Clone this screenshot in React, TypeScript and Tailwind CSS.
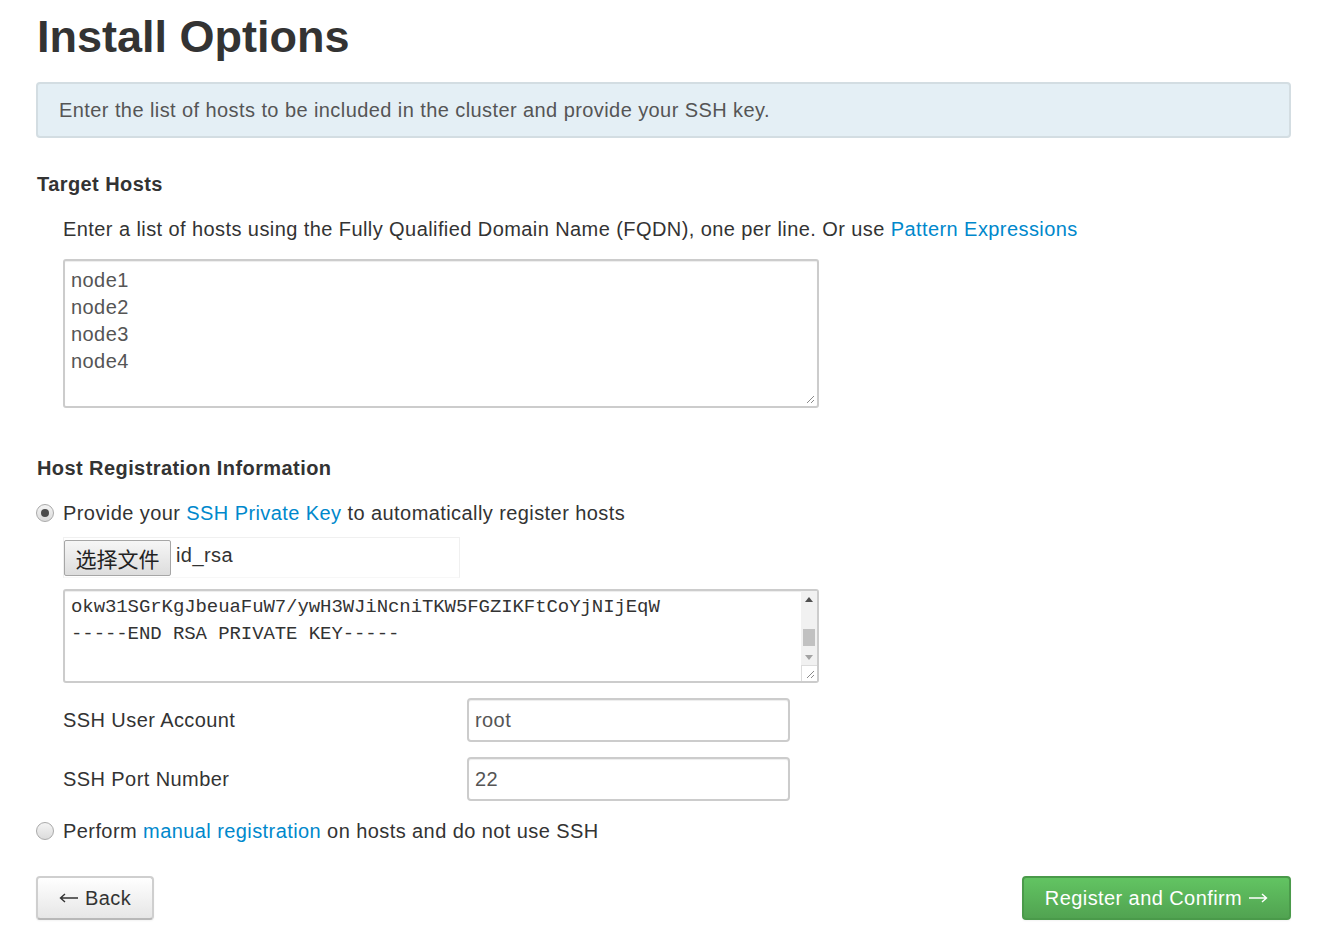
import React from 'react';

const Radio: React.FC<{ checked?: boolean }> = ({ checked }) => (
  <span className="flex h-[18px] w-[18px] shrink-0 items-center justify-center rounded-full border border-[#a9a9a9] bg-gradient-to-b from-[#f4f4f4] to-[#dcdcdc]">
    {checked && <span className="h-[8px] w-[8px] rounded-full bg-[#4d4d4d]" />}
  </span>
);

const Grip: React.FC = () => (
  <svg className="absolute bottom-[2px] right-[2px] h-[10px] w-[10px]" viewBox="0 0 10 10">
    <path d="M9 2L2 9M9 6L6 9" stroke="#8a8a8a" strokeWidth="1" />
  </svg>
);

const Arrow: React.FC<{ dir: 'left' | 'right'; color: string }> = ({ dir, color }) => (
  <svg width="20" height="10" viewBox="0 0 20 10" className="inline-block align-middle">
    {dir === 'left' ? (
      <path d="M19 5H2M6 1L1.5 5L6 9" fill="none" stroke={color} strokeWidth="1.4" />
    ) : (
      <path d="M1 5H18M14 1L18.5 5L14 9" fill="none" stroke={color} strokeWidth="1.4" />
    )}
  </svg>
);

const Link: React.FC<{ children: React.ReactNode }> = ({ children }) => (
  <a className="text-[#0088cc]">{children}</a>
);

export default function App() {
  const hosts = ['node1', 'node2', 'node3', 'node4'];

  return (
    <div className="min-h-[930px] bg-white px-[36px] text-[20px] tracking-[0.42px] text-[#333] font-['Liberation_Sans',Arial,sans-serif]">
      <h1 className="mt-[12px] ml-[1px] text-[45px] font-bold leading-[50px] tracking-normal text-[#333]">
        Install Options
      </h1>

      <div className="mt-[20px] flex h-[56px] items-center rounded-[4px] border-2 border-[#d3dde2] bg-[#e4eff5] px-[21px] text-[#555]">
        Enter the list of hosts to be included in the cluster and provide your SSH key.
      </div>

      {/* Target Hosts */}
      <h4 className="mt-[32px] ml-[1px] font-bold leading-[28px]">Target Hosts</h4>
      <div className="pl-[27px]">
        <p className="mt-[17px] leading-[28px]">
          Enter a list of hosts using the Fully Qualified Domain Name (FQDN), one per line. Or use{' '}
          <Link>Pattern Expressions</Link>
        </p>
        <div className="relative mt-[16px] h-[149px] w-[756px] rounded-[3px] border-2 border-[#cccccc] px-[6px] pt-[6px] leading-[27px] text-[#555] shadow-[inset_0_1px_1px_rgba(0,0,0,0.075)]">
          {hosts.map((h) => (
            <div key={h}>{h}</div>
          ))}
          <Grip />
        </div>
      </div>

      {/* Host Registration */}
      <h4 className="mt-[46px] ml-[1px] font-bold leading-[28px]">Host Registration Information</h4>

      <div className="mt-[17px] flex h-[28px] items-center">
        <span className="w-[27px]">
          <Radio checked />
        </span>
        <span>
          Provide your <Link>SSH Private Key</Link> to automatically register hosts
        </span>
      </div>

      <div className="pl-[27px]">
        <div className="mt-[10px] flex h-[41px] w-[397px] items-center border border-[#f0f0f0] border-b-[#f7f7f7]">
          <button className="h-[36px] w-[107px] rounded-[2px] border border-[#a6a6a6] bg-gradient-to-b from-[#f6f6f6] to-[#dddddd] pt-[1px] text-[21px] leading-none tracking-normal text-[#222] font-['Noto_Sans_CJK_SC',sans-serif]">
            选择文件
          </button>
          <span className="ml-[5px] -mt-[6px]">id_rsa</span>
        </div>

        <div className="relative mt-[11px] flex h-[94px] w-[756px] rounded-[3px] border-2 border-[#cccccc] shadow-[inset_0_1px_1px_rgba(0,0,0,0.075)]">
          <div className="flex-1 whitespace-pre pl-[6px] pt-[3px] text-[19px] leading-[27px] tracking-[-0.08px] text-[#333] font-['Liberation_Mono','Courier_New',monospace]">
            <div>okw31SGrKgJbeuaFuW7/ywH3WJiNcniTKW5FGZIKFtCoYjNIjEqW</div>
            <div>-----END RSA PRIVATE KEY-----</div>
          </div>
          <div className="flex w-[16px] flex-col bg-[#f1f1f1]">
            <div className="flex h-[16px] items-center justify-center">
              <svg width="8" height="5" viewBox="0 0 8 5">
                <path d="M4 0L8 5H0z" fill="#505050" />
              </svg>
            </div>
            <div className="mt-[22px] mx-[2px] h-[17px] bg-[#c1c1c1]" />
            <div className="mt-[3px] flex h-[16px] items-center justify-center">
              <svg width="8" height="5" viewBox="0 0 8 5">
                <path d="M0 0H8L4 5z" fill="#a3a3a3" />
              </svg>
            </div>
            <div className="mt-auto h-[16px] border-l border-t border-[#dcdcdc] bg-white" />
          </div>
          <Grip />
        </div>

        <div className="mt-[15px] flex items-center">
          <label className="w-[404px]">SSH User Account</label>
          <div className="flex h-[44px] w-[323px] items-center rounded-[4px] border-2 border-[#cccccc] px-[6px] text-[#555] shadow-[inset_0_1px_1px_rgba(0,0,0,0.075)]">
            root
          </div>
        </div>
        <div className="mt-[15px] flex items-center">
          <label className="w-[404px]">SSH Port Number</label>
          <div className="flex h-[44px] w-[323px] items-center rounded-[4px] border-2 border-[#cccccc] px-[6px] text-[#555] shadow-[inset_0_1px_1px_rgba(0,0,0,0.075)]">
            22
          </div>
        </div>
      </div>

      <div className="mt-[16px] flex h-[28px] items-center">
        <span className="w-[27px]">
          <Radio />
        </span>
        <span>
          Perform <Link>manual registration</Link> on hosts and do not use SSH
        </span>
      </div>

      <div className="mt-[31px] flex items-center justify-between">
        <button className="flex h-[44px] w-[118px] items-center justify-center gap-[6px] rounded-[4px] border-2 border-[#cfcfcf] border-b-[#b8b8b8] bg-gradient-to-b from-white to-[#e6e6e6] text-[20px] text-[#333] shadow-[0_1px_2px_rgba(0,0,0,0.05)]">
          <Arrow dir="left" color="#333" />
          <span>Back</span>
        </button>
        <button className="flex h-[44px] w-[269px] items-center justify-center gap-[6px] rounded-[4px] border-2 border-[#4a9a4a] bg-gradient-to-b from-[#62c462] to-[#51a351] text-[20px] text-white shadow-[0_1px_2px_rgba(0,0,0,0.05)]">
          <span>Register and Confirm</span>
          <Arrow dir="right" color="#fff" />
        </button>
      </div>
    </div>
  );
}
